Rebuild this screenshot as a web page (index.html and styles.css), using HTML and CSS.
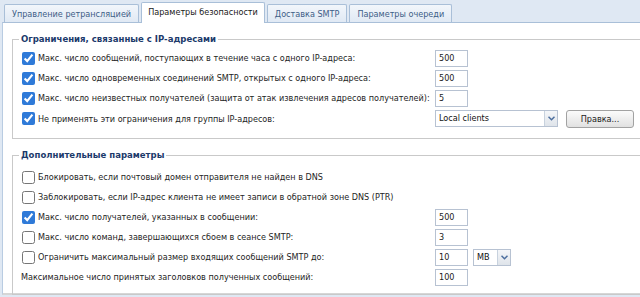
FILE: index.html
```html
<!DOCTYPE html>
<html lang="ru">
<head>
  <meta charset="UTF-8">
  <title>Параметры безопасности</title>
  <link rel="stylesheet" href="styles.css">
</head>
<body>
  <div class="page">
    <div class="tabs">
      <div class="tab">Управление ретрансляцией</div>
      <div class="tab active">Параметры безопасности</div>
      <div class="tab">Доставка SMTP</div>
      <div class="tab">Параметры очереди</div>
    </div>

    <div class="panel">
      <fieldset>
        <legend>Ограничения, связанные с IP-адресами</legend>

        <div class="row">
          <label><input type="checkbox" checked> Макс. число сообщений, поступающих в течение часа с одного IP-адреса:</label>
          <input class="num" type="text" value="500">
        </div>
        <div class="row">
          <label><input type="checkbox" checked> Макс. число одновременных соединений SMTP, открытых с одного IP-адреса:</label>
          <input class="num" type="text" value="500">
        </div>
        <div class="row">
          <label><input type="checkbox" checked> Макс. число неизвестных получателей (защита от атак извлечения адресов получателей):</label>
          <input class="num" type="text" value="5">
        </div>
        <div class="row tall">
          <label><input type="checkbox" checked> Не применять эти ограничения для группы IP-адресов:</label>
          <div class="select wide">
            <span class="value">Local clients</span>
            <span class="arrow"><svg width="7" height="5" viewBox="0 0 7 5"><path d="M0.5 0.8 L3.5 3.8 L6.5 0.8" fill="none" stroke="#4d6f9f" stroke-width="1.5"/></svg></span>
          </div>
          <button class="btn">Правка...</button>
        </div>
      </fieldset>

      <fieldset class="second">
        <legend>Дополнительные параметры</legend>

        <div class="row">
          <label><input type="checkbox"> Блокировать, если почтовый домен отправителя не найден в DNS</label>
        </div>
        <div class="row">
          <label><input type="checkbox"> Заблокировать, если IP-адрес клиента не имеет записи в обратной зоне DNS (PTR)</label>
        </div>
        <div class="row">
          <label><input type="checkbox" checked> Макс. число получателей, указанных в сообщении:</label>
          <input class="num" type="text" value="500">
        </div>
        <div class="row">
          <label><input type="checkbox"> Макс. число команд, завершающихся сбоем в сеансе SMTP:</label>
          <input class="num" type="text" value="3">
        </div>
        <div class="row">
          <label><input type="checkbox"> Ограничить максимальный размер входящих сообщений SMTP до:</label>
          <input class="num" type="text" value="10">
          <div class="select small">
            <span class="value">MB</span>
            <span class="arrow"><svg width="7" height="5" viewBox="0 0 7 5"><path d="M0.5 0.8 L3.5 3.8 L6.5 0.8" fill="none" stroke="#4d6f9f" stroke-width="1.5"/></svg></span>
          </div>
        </div>
        <div class="row">
          <label class="plain">Максимальное число принятых заголовков полученных сообщений:</label>
          <input class="num" type="text" value="100">
        </div>
      </fieldset>
    </div>
  </div>
</body>
</html>
```

FILE: styles.css
```css
html, body {
  margin: 0;
  overflow: hidden;
}
body {
  font-family: "DejaVu Sans Condensed", "DejaVu Sans", sans-serif;
  font-size: 9px;
  color: #1e1e1e;
  background: #dfe8f3;
}
.tabs {
  display: flex;
  align-items: flex-end;
  gap: 2px;
  height: 22px;
  padding-left: 4px;
}
.tab {
  height: 17px;
  line-height: 18px;
  padding: 0 7px;
  border: 1px solid #a9bfd8;
  border-bottom: none;
  border-radius: 2px 2px 0 0;
  background: linear-gradient(#f2f6fb, #e0e9f4);
  color: #3e5e87;
}
.tab.active {
  height: 20px;
  line-height: 19px;
  padding: 0 6px;
  background: #fff;
  color: #1a1a1a;
  margin-bottom: -1px;
  position: relative;
}
.panel {
  margin-left: 2px;
  background: #fff;
  border-top: 1px solid #a9bfd8;
  border-left: 1px solid #b9cce2;
  border-bottom: 2px solid #d6d6d6;
  padding: 9px 0 0 9px;
  height: 261px;
}
fieldset {
  margin: 0;
  padding: 2px 0 9px 9px;
  border: 1px solid #c9c9c9;
  border-right: none;
}
fieldset.second {
  margin-top: 9px;
  padding-top: 5px;
  padding-bottom: 7px;
}
legend {
  margin-left: -3px;
  padding: 0 2px;
  font-size: 9.5px;
  font-weight: bold;
  color: #1c3a6b;
  line-height: 14px;
}
.row {
  display: flex;
  align-items: center;
  height: 20px;
}
.row.tall {
  height: 21px;
}
.row label {
  display: flex;
  align-items: center;
  width: 413px;
  white-space: nowrap;
}
.row label input {
  width: 13px;
  height: 13px;
  margin: 0 3px 0 0;
  accent-color: #2f7ad8;
}
.row label.plain {
  margin-left: -1px;
  width: 414px;
}
.num {
  width: 33px;
  height: 17px;
  box-sizing: border-box;
  border: 1px solid #b7c2d2;
  padding: 0 3px;
  font: inherit;
  color: #222;
}
.select {
  display: flex;
  height: 17px;
  box-sizing: border-box;
  border: 1px solid #b7c2d2;
  background: #fff;
}
.select .value {
  flex: 1;
  padding-left: 3px;
  line-height: 15px;
  color: #111;
}
.select .arrow {
  width: 12px;
  display: flex;
  align-items: center;
  justify-content: center;
  border-left: 1px solid #c8d2de;
  background: linear-gradient(#f4f6f9, #dfe4ea);
}
.select.wide {
  width: 123px;
}
.select.small {
  width: 38px;
  margin-left: 5px;
}
.btn {
  margin-left: 8px;
  width: 68px;
  height: 18px;
  border: 1px solid #a2a2a2;
  border-radius: 3px;
  background: linear-gradient(#fbfbfb, #e1e1e1);
  font: inherit;
  color: #222;
  padding: 0;
}
```
